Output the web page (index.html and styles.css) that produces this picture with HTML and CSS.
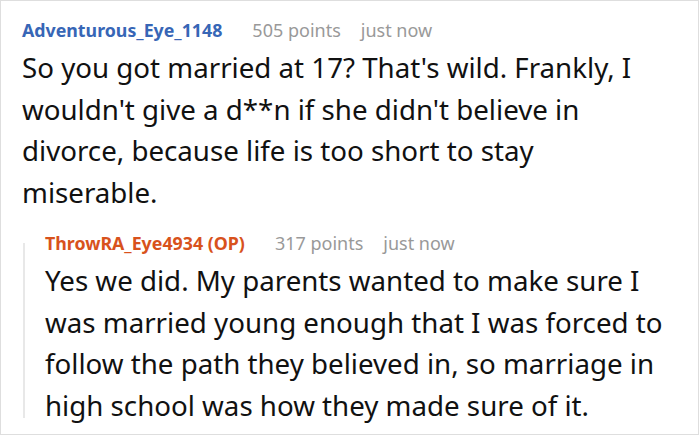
FILE: index.html
```html
<!DOCTYPE html>
<html>
<head>
<meta charset="utf-8">
<link rel="stylesheet" href="styles.css">
</head>
<body>
<div class="frame">
  <div class="comment">
    <div class="meta">
      <span class="author">Adventurous_Eye_1148</span>
      <span class="info">505 points</span>
      <span class="info">just now</span>
    </div>
    <p class="body">So you got married at 17? That's wild. Frankly, I wouldn't give a d**n if she didn't believe in divorce, because life is too short to stay miserable.</p>
  </div>
  <div class="reply">
    <div class="thread-line"></div>
    <div class="comment">
      <div class="meta">
        <span class="author op">ThrowRA_Eye4934 (OP)</span>
        <span class="info">317 points</span>
        <span class="info">just now</span>
      </div>
      <p class="body">Yes we did. My parents wanted to make sure I was married young enough that I was forced to follow the path they believed in, so marriage in high school was how they made sure of it.</p>
    </div>
  </div>
</div>
</body>
</html>
```
FILE: styles.css
```css
html, body {
  margin: 0;
  padding: 0;
  background: #fff;
}
.frame {
  width: 699px;
  height: 435px;
  box-sizing: border-box;
  border: 1px solid #dedede;
  padding: 17px 28px 0 21px;
  font-family: "Noto Sans", "Open Sans", sans-serif;
  color: #111;
  overflow: hidden;
}
.meta {
  display: flex;
  align-items: baseline;
  font-size: 18px;
  line-height: 24px;
  white-space: nowrap;
}
.author {
  font-size: 17.8px;
  font-weight: 700;
  color: #3766b6;
  margin-right: 30px;
}
.author.op {
  color: #d8521c;
}
.info {
  color: #999;
  margin-right: 20px;
}
.body {
  margin: 5px 0 0 0;
  font-size: 27.7px;
  line-height: 41.5px;
}
.reply {
  display: flex;
  margin-top: 18px;
}
.thread-line {
  flex: 0 0 2px;
  background: #e8e8e8;
  margin: 12px 20px 8px 1px;
}
```
